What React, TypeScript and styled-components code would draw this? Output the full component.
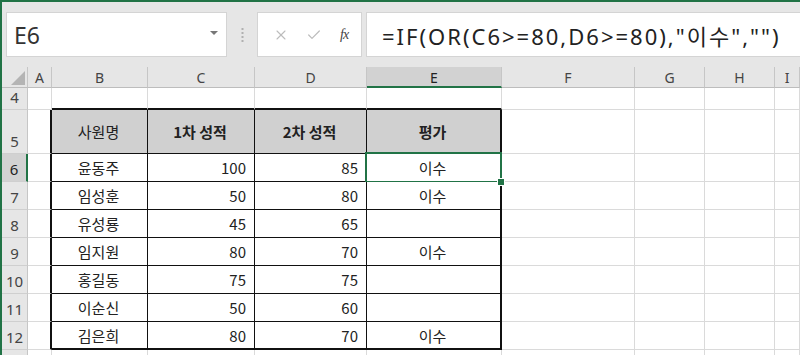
import styled, { createGlobalStyle, css } from "styled-components";
import { Fragment } from "react";
import { X, Check } from "lucide-react";

const GlobalStyle = createGlobalStyle`
  html, body {
    margin: 0;
    padding: 0;
    background: #ffffff;
  }
  body {
    font-family: "Noto Sans", "Noto Sans CJK KR", sans-serif;
  }
`;

const GREEN = "#217346";
const GRID = "#dadada";

const Window = styled.div`
  width: 798px;
  height: 353px;
  overflow: hidden;
  border-top: 2px solid ${GREEN};
  border-left: 2px solid ${GREEN};
  background: #ffffff;
`;

const Toolbar = styled.div`
  height: 65px;
  box-sizing: border-box;
  padding: 10px 0 10px 4px;
  background: #e6e6e6;
  display: flex;
  align-items: stretch;
`;

const NameBox = styled.div`
  width: 221px;
  box-sizing: border-box;
  background: #fff;
  border: 1px solid #d4d4d4;
  display: flex;
  align-items: center;
  justify-content: space-between;
  padding: 0 8px 0 7px;
  font-family: "Noto Sans", sans-serif;
  font-size: 23px;
  color: #333;
`;

const Caret = styled.span`
  width: 0;
  height: 0;
  border-left: 4px solid transparent;
  border-right: 4px solid transparent;
  border-top: 4px solid #777;
  margin-bottom: 4px;
`;

const Grip = styled.div`
  width: 30px;
  display: flex;
  align-items: center;
  justify-content: center;
`;

const FxBox = styled.div`
  width: 105px;
  box-sizing: border-box;
  background: #fff;
  border: 1px solid #d4d4d4;
  display: flex;
  align-items: center;
  justify-content: space-around;
  padding: 0 4px 0 6px;
  color: #bcbcbc;
`;

const FxLabel = styled.span`
  font-family: "Liberation Serif", serif;
  font-style: italic;
  font-size: 14px;
  color: #444;
  letter-spacing: -1px;
`;

const Formula = styled.div`
  flex: 1;
  margin-left: 4px;
  background: #fff;
  border: 1px solid #d4d4d4;
  border-right: none;
  display: flex;
  align-items: center;
  padding-left: 15px;
  font-family: "Noto Sans", "Noto Sans CJK KR", sans-serif;
  font-size: 22px;
  letter-spacing: 2px;
  color: #222;
  white-space: nowrap;
  overflow: hidden;
`;

const Sheet = styled.div`
  display: grid;
  grid-template-columns: 26px 24px 96px 107px 112px 135px 133px 70px 70px 1fr;
  grid-template-rows: 21px 22px 44px repeat(8, 28px);
`;

const ColHead = styled.div<{ $active?: boolean }>`
  box-sizing: border-box;
  background: ${(p) => (p.$active ? "#d2d2d2" : "#e6e6e6")};
  border-right: 1px solid #c6c6c6;
  border-bottom: ${(p) => (p.$active ? `2px solid ${GREEN}` : "1px solid #bdbdbd")};
  display: flex;
  align-items: center;
  justify-content: center;
  font-family: "Noto Sans", sans-serif;
  font-size: 14px;
  color: ${(p) => (p.$active ? "#222" : "#444")};
  padding-top: 1px;
`;

const Corner = styled.div`
  box-sizing: border-box;
  background: #e6e6e6;
  border-right: 1px solid #c6c6c6;
  border-bottom: 1px solid #bdbdbd;
  display: flex;
  align-items: flex-end;
  justify-content: flex-end;
  padding: 0 2px 2px 0;
`;

const RowHead = styled.div<{ $active?: boolean }>`
  box-sizing: border-box;
  background: ${(p) => (p.$active ? "#d2d2d2" : "#e6e6e6")};
  border-right: ${(p) => (p.$active ? `2px solid ${GREEN}` : "1px solid #c6c6c6")};
  border-bottom: 1px solid #cfcfcf;
  display: flex;
  align-items: flex-end;
  justify-content: center;
  padding-bottom: 2px;
  font-family: "Noto Sans", sans-serif;
  font-size: 15px;
  color: ${(p) => (p.$active ? "#222" : "#444")};
`;

type Edge = { right: string; bottom: string };

const Cell = styled.div<{
  $br: string;
  $bb: string;
  $align?: "left" | "center" | "right";
  $fill?: boolean;
  $bold?: boolean;
  $selected?: boolean;
}>`
  position: relative;
  box-sizing: border-box;
  border-right: ${(p) => p.$br};
  border-bottom: ${(p) => p.$bb};
  background: ${(p) => (p.$fill ? "#d0d0d0" : "#fff")};
  display: flex;
  align-items: center;
  justify-content: ${(p) =>
    p.$align === "right" ? "flex-end" : p.$align === "center" ? "center" : "flex-start"};
  padding: 0 8px 0 6px;
  font-family: "Noto Sans CJK KR", "Noto Sans", sans-serif;
  font-size: 15px;
  font-weight: ${(p) => (p.$bold ? 700 : 400)};
  color: #222;
  ${(p) =>
    p.$selected &&
    css`
      &::after {
        content: "";
        position: absolute;
        left: -2px;
        top: -2px;
        right: -2px;
        bottom: -2px;
        border: 2px solid ${GREEN};
      }
      &::before {
        content: "";
        position: absolute;
        right: -5px;
        bottom: -5px;
        width: 6px;
        height: 6px;
        background: ${GREEN};
        border: 1px solid #fff;
        z-index: 2;
      }
    `}
`;

const columns = ["A", "B", "C", "D", "E", "F", "G", "H", "I"];

const data = [
  { name: "윤동주", a: "100", b: "85", r: "이수" },
  { name: "임성훈", a: "50", b: "80", r: "이수" },
  { name: "유성룡", a: "45", b: "65", r: "" },
  { name: "임지원", a: "80", b: "70", r: "이수" },
  { name: "홍길동", a: "75", b: "75", r: "" },
  { name: "이순신", a: "50", b: "60", r: "" },
  { name: "김은희", a: "80", b: "70", r: "이수" },
];

const thin = `1px solid ${GRID}`;
const black = "1px solid #111";
const thick = "2px solid #111";

// rows 4..13, cols A..I; the table lives in B5:E12
function edges(row: number, col: number): Edge {
  const inTable = row >= 5 && row <= 12 && col >= 1 && col <= 4;
  let right = thin;
  let bottom = thin;
  if (inTable) {
    right = col === 4 ? thick : black;
    bottom = row === 12 ? thick : black;
  }
  if (row === 4 && col >= 1 && col <= 4) bottom = thick;
  if (col === 0 && row >= 5 && row <= 12) right = thick;
  return { right, bottom };
}

function cellContent(row: number, col: number) {
  if (row === 5) {
    return ["", "사원명", "1차 성적", "2차 성적", "평가"][col] ?? "";
  }
  const d = data[row - 6];
  if (!d) return "";
  return ["", d.name, d.a, d.b, d.r][col] ?? "";
}

function alignFor(row: number, col: number): "left" | "center" | "right" {
  if (row >= 6 && (col === 2 || col === 3)) return "right";
  return "center";
}

export default function App() {
  const rows = [4, 5, 6, 7, 8, 9, 10, 11, 12, 13];
  return (
    <Window>
      <GlobalStyle />
      <Toolbar>
        <NameBox>
          <span>E6</span>
          <Caret />
        </NameBox>
        <Grip>
          <svg width="3" height="16" viewBox="0 0 3 16">
            {[1, 5, 9, 13].map((y) => (
              <rect key={y} x="0.5" y={y} width="2" height="2" fill="#b0b0b0" />
            ))}
          </svg>
        </Grip>
        <FxBox>
          <X size={16} strokeWidth={1.6} />
          <Check size={16} strokeWidth={1.8} />
          <FxLabel>fx</FxLabel>
        </FxBox>
        <Formula>=IF(OR(C6&gt;=80,D6&gt;=80),"이수","")</Formula>
      </Toolbar>
      <Sheet>
        <Corner>
          <svg width="14" height="14" viewBox="0 0 14 14">
            <polygon points="14,0 14,14 0,14" fill="#b4b4b4" />
          </svg>
        </Corner>
        {columns.map((c) => (
          <ColHead key={c} $active={c === "E"}>
            {c}
          </ColHead>
        ))}
        {rows.map((r) => (
          <Fragment key={r}>
            {/* row 13 is only a sliver at the bottom edge */}
            <RowHead $active={r === 6}>{r < 13 ? r : ""}</RowHead>
            {columns.map((c, ci) => {
              const e = edges(r, ci);
              const isHead = r === 5 && ci >= 1 && ci <= 4;
              return (
                <Cell
                  key={`${c}${r}`}
                  $br={e.right}
                  $bb={e.bottom}
                  $align={alignFor(r, ci)}
                  $fill={isHead}
                  $bold={isHead && ci > 1}
                  $selected={r === 6 && ci === 4}
                >
                  {cellContent(r, ci)}
                </Cell>
              );
            })}
          </Fragment>
        ))}
      </Sheet>
    </Window>
  );
}
